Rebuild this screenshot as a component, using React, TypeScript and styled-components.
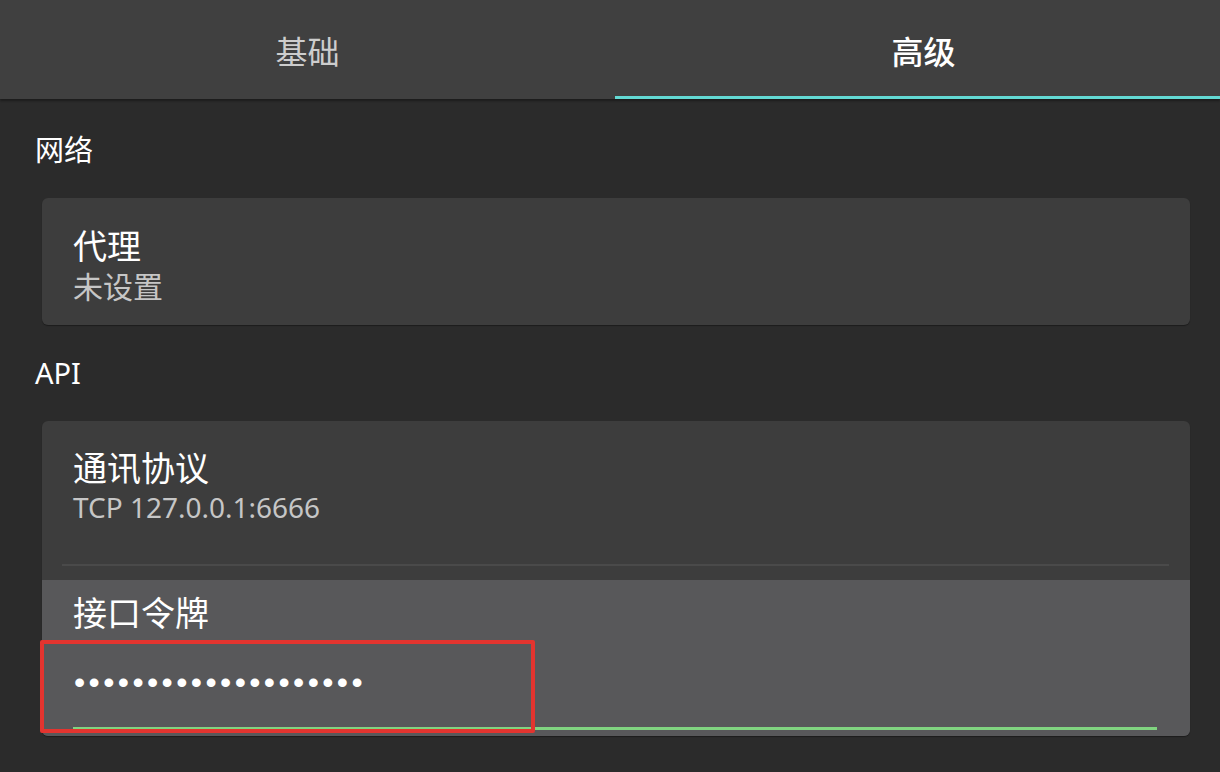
import React from "react";
import styled, { createGlobalStyle } from "styled-components";

const GlobalStyle = createGlobalStyle`
  html, body {
    margin: 0;
    padding: 0;
    background: #2b2b2b;
  }
  body {
    font-family: "Noto Sans", "Noto Sans CJK SC", sans-serif;
    color: #ffffff;
  }
  * { box-sizing: border-box; }
`;

const Page = styled.div`
  width: 1220px;
  height: 772px;
  overflow: hidden;
  background: #2b2b2b;
  display: flex;
  flex-direction: column;
`;

const TabBar = styled.div`
  display: grid;
  grid-template-columns: 615px 1fr;
  height: 99px;
  background: #404040;
  box-shadow: 0 2px 2px rgba(0, 0, 0, 0.35);
  position: relative;
  z-index: 1;
`;

const Tab = styled.div<{ $active?: boolean }>`
  display: flex;
  align-items: center;
  justify-content: center;
  padding-top: 3px;
  padding-left: ${(p) => (p.$active ? "12px" : "0")};
  font-family: "Noto Sans CJK SC", sans-serif;
  font-size: 32px;
  font-weight: ${(p) => (p.$active ? 500 : 400)};
  color: ${(p) => (p.$active ? "#ffffff" : "#cdcdcd")};
  border-bottom: 3px solid ${(p) => (p.$active ? "#63dad4" : "transparent")};
`;

const Content = styled.div`
  display: flex;
  flex-direction: column;
  gap: 28px;
  padding: 31px 30px 0 35px;
`;

const Section = styled.section`
  display: flex;
  flex-direction: column;
  gap: 28px;
`;

const SectionTitle = styled.h2`
  margin: 0;
  font-family: "Noto Sans", "Noto Sans CJK SC", sans-serif;
  font-weight: 400;
  font-size: 29px;
  line-height: 40px;
  color: #ffffff;
`;

const Card = styled.div`
  margin-left: 7px;
  background: #3d3d3d;
  border-radius: 6px;
  box-shadow: 0 1px 1px rgba(0, 0, 0, 0.35);
  display: flex;
  flex-direction: column;
`;

const Row = styled.div<{ $pt: number; $pb: number; $hover?: boolean }>`
  position: relative;
  display: flex;
  flex-direction: column;
  padding: ${(p) => `${p.$pt}px 33px ${p.$pb}px 31px`};
  background: ${(p) => (p.$hover ? "#58585a" : "transparent")};
  border-radius: ${(p) => (p.$hover ? "0 0 6px 6px" : "0")};
`;

const RowTitle = styled.div`
  font-family: "Noto Sans CJK SC", sans-serif;
  font-size: 34px;
  line-height: 40px;
  color: #ffffff;
`;

const RowValue = styled.div<{ $lh?: number; $size?: number }>`
  font-family: "Noto Sans", "Noto Sans CJK SC", sans-serif;
  font-size: ${(p) => p.$size ?? 30}px;
  line-height: ${(p) => p.$lh ?? 40}px;
  color: #c6c6c6;
`;

const Divider = styled.div`
  height: 2px;
  margin: 0 21px 14px 20px;
  background: #4a4a4a;
`;

const Input = styled.div`
  margin-top: 8px;
  height: 90px;
  padding-top: 27px;
  border-bottom: 3px solid #80d480;
  font-family: "Liberation Sans", sans-serif;
  font-size: 32px;
  line-height: 30px;
  letter-spacing: 3.4px;
  color: #ffffff;
  padding-left: 1px;
`;

const Highlight = styled.div`
  position: absolute;
  left: -2px;
  top: 60px;
  width: 495px;
  height: 93px;
  border: 4px solid #e3342f;
  border-radius: 2px;
  pointer-events: none;
`;

export default function App() {
  return (
    <>
      <GlobalStyle />
      <Page>
        <TabBar>
          <Tab>基础</Tab>
          <Tab $active>高级</Tab>
        </TabBar>
        <Content>
          <Section>
            <SectionTitle>网络</SectionTitle>
            <Card>
              <Row $pt={27} $pb={16}>
                <RowTitle>代理</RowTitle>
                <RowValue $lh={44}>未设置</RowValue>
              </Row>
            </Card>
          </Section>
          <Section>
            <SectionTitle>API</SectionTitle>
            <Card>
              <Row $pt={26} $pb={37}>
                <RowTitle>通讯协议</RowTitle>
                <RowValue $size={28}>TCP 127.0.0.1:6666</RowValue>
              </Row>
              <Divider />
              <Row $pt={12} $pb={6} $hover>
                <RowTitle>接口令牌</RowTitle>
                <Input>{"•".repeat(20)}</Input>
                <Highlight />
              </Row>
            </Card>
          </Section>
        </Content>
      </Page>
    </>
  );
}
